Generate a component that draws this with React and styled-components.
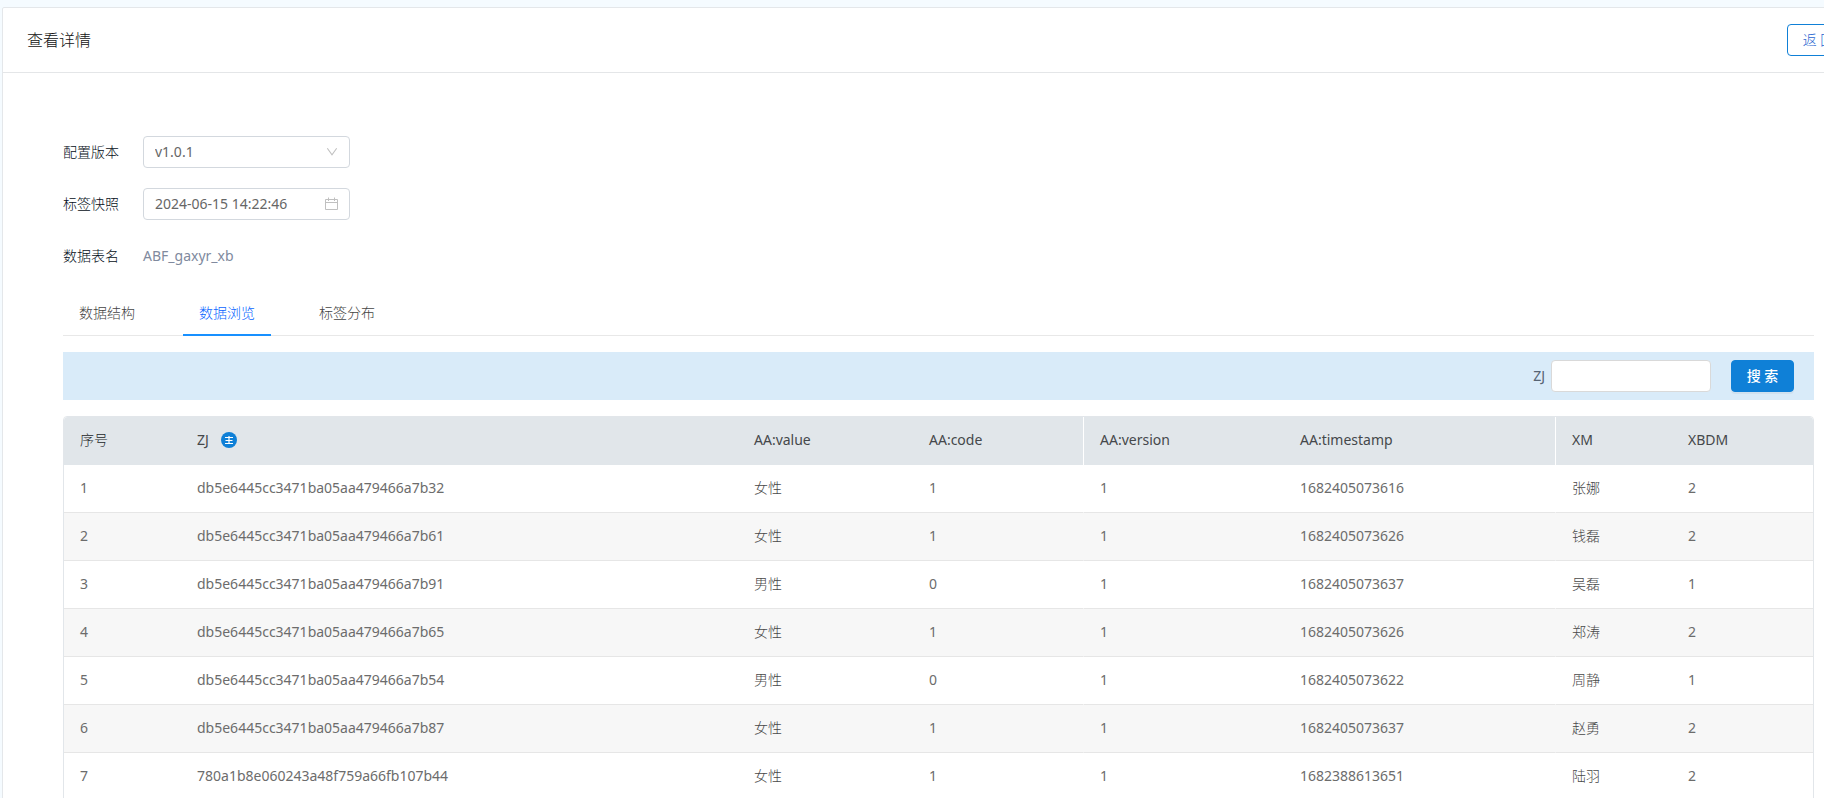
import React from 'react';
import styled, { createGlobalStyle } from 'styled-components';

const GlobalStyle = createGlobalStyle`
  *, *::before, *::after { box-sizing: border-box; }
  html, body { margin: 0; height: 100%; }
  body {
    overflow: hidden;
    background: #f5fbff;
    color: #595959;
    font-family: 'Noto Sans', 'Noto Sans CJK SC', sans-serif;
    font-size: 14px;
    font-weight: 300;
    line-height: 22px;
  }
  button, input, select { font: inherit; color: inherit; }
`;

/* The panel runs past the right edge of the window, which clips it. */
const Panel = styled.main`
  width: calc(100% + 49px);
  margin: 7px 0 0 2px;
  background: #fff;
  border: 1px solid #e4e7ea;
  border-radius: 2px;
`;

const Header = styled.header`
  display: flex;
  align-items: center;
  justify-content: space-between;
  height: 65px;
  padding: 0 24px;
  border-bottom: 1px solid #e4e6e8;
`;

const Title = styled.h1`
  margin: 0;
  font-size: 16px;
  line-height: 24px;
  font-weight: 300;
  color: #111;
`;

const Button = styled.button`
  width: 63px;
  height: 32px;
  padding: 0;
  border: 1px solid #0f80d7;
  border-radius: 4px;
  background: ${(p) => (p.$primary ? '#0f80d7' : '#fff')};
  color: ${(p) => (p.$primary ? '#fff' : '#1f66d0')};
  font-weight: ${(p) => (p.$primary ? 500 : 300)};
  line-height: 22px;
  white-space: pre;
  box-shadow: ${(p) => (p.$primary ? '0 2px 0 rgba(0, 0, 0, 0.04)' : 'none')};
`;

const Body = styled.div`
  padding: 63px 60px 24px;
`;

const Form = styled.div`
  display: grid;
  grid-template-columns: 80px 207px;
  grid-auto-rows: 32px;
  row-gap: 20px;
  align-items: center;
`;

const Label = styled.label`
  color: #050e20;
`;

const TableName = styled.output`
  color: #808a9e;
  font-weight: 400;
`;

const Field = styled.div`
  display: flex;
  align-items: center;
  height: 32px;
  padding-right: 11px;
  border: 1px solid #d3d8de;
  border-radius: 4px;
  background: #fff;
  color: #c0c0c0;
`;

const Select = styled.select`
  appearance: none;
  flex: 1;
  min-width: 0;
  height: 30px;
  padding: 0 0 0 11px;
  border: 0;
  outline: 0;
  background: transparent;
  color: #666;
  font-weight: 400;
`;

const DateInput = styled.input`
  flex: 1;
  min-width: 0;
  height: 30px;
  padding: 0 0 2px 11px;
  border: 0;
  outline: 0;
  background: transparent;
  color: #666;
  font-weight: 400;
`;

const Tabs = styled.div`
  display: flex;
  gap: 32px;
  height: 46px;
  margin-top: 18px;
  border-bottom: 1px solid #e8e8e8;
`;

const Tab = styled.button`
  height: 46px;
  padding: 2px 16px 0;
  border: 0;
  border-bottom: 2px solid ${(p) => (p.$active ? '#1890ff' : 'transparent')};
  background: none;
  color: ${(p) => (p.$active ? '#0a66ff' : '#444')};
`;

const SearchBar = styled.form`
  display: flex;
  align-items: center;
  justify-content: flex-end;
  height: 48px;
  margin: 16px 0;
  padding-right: 20px;
  background: #d9ebf9;
  color: #566373;
  font-weight: 400;
`;

const SearchInput = styled.input`
  width: 160px;
  height: 32px;
  margin: 0 20px 0 6px;
  padding: 0 12px;
  border: 1px solid #d9d9d9;
  border-radius: 4px;
  background: #fff;
`;

const Table = styled.table`
  width: 100%;
  table-layout: fixed;
  border-collapse: separate;
  border-spacing: 0;
  border: 1px solid #e2e6ea;
  border-radius: 4px;
`;

const Col = styled.col`
  width: ${(p) => p.$width};
`;

const HeadCell = styled.th`
  height: 48px;
  padding: 0 16px 2px;
  border-right: ${(p) => (p.$split ? '1px solid #fff' : '0')};
  background: #e1e6ea;
  color: ${(p) => (p.$light ? '#222528' : '#45484b')};
  font-weight: ${(p) => (p.$light ? 300 : 400)};
  text-align: left;

  &:first-child { border-top-left-radius: 4px; }
  &:last-child { border-top-right-radius: 4px; }
`;

const HeadLabel = styled.span`
  display: flex;
  align-items: center;
  gap: 12px;
`;

const Row = styled.tr`
  background: #fff;
  &:nth-child(even) { background: #f7f7f7; }
`;

const Cell = styled.td`
  height: 48px;
  padding: 0 16px 2px;
  border-right: ${(p) => (p.$split ? '1px solid transparent' : '0')};
  border-bottom: 1px solid #e6e6e6;
  color: ${(p) => (p.$light ? '#484848' : '#6c6c6c')};
  font-weight: ${(p) => (p.$light ? 300 : 400)};
`;

const ChevronIcon = () => (
  <svg width="12" height="12" viewBox="0 0 12 12" fill="none" stroke="currentColor" aria-hidden="true">
    <path d="M1.3 2.2 6 8.8l4.7-6.6" strokeWidth="1.1" />
  </svg>
);

const CalendarIcon = () => (
  <svg width="13" height="14" viewBox="0 0 13 14" fill="none" stroke="currentColor" aria-hidden="true">
    <path d="M.5 2.5h12v10H.5zM.5 5.5h12M3.5.5v3.5M9.5.5v3.5" />
  </svg>
);

const KeyBadge = () => (
  <svg width="16" height="16" viewBox="0 0 16 16" role="img" aria-label="主键">
    <circle cx="8" cy="8" r="8" fill="#0f80d7" />
    <path d="M4 5.5h8M4.5 8.5h7M4 11.5h8M8 4v7.5" fill="none" stroke="#fff" strokeWidth="1.2" />
  </svg>
);

const columns = [
  { title: '序号', width: '117px', lightHead: true },
  { title: 'ZJ', width: 'auto', primary: true },
  { title: 'AA:value', width: '175px', light: true },
  { title: 'AA:code', width: '171px', split: true },
  { title: 'AA:version', width: '200px' },
  { title: 'AA:timestamp', width: '272px', split: true },
  { title: 'XM', width: '116px', light: true },
  { title: 'XBDM', width: '141px' },
];

const rows = [
  ['1', 'db5e6445cc3471ba05aa479466a7b32', '女性', '1', '1', '1682405073616', '张娜', '2'],
  ['2', 'db5e6445cc3471ba05aa479466a7b61', '女性', '1', '1', '1682405073626', '钱磊', '2'],
  ['3', 'db5e6445cc3471ba05aa479466a7b91', '男性', '0', '1', '1682405073637', '吴磊', '1'],
  ['4', 'db5e6445cc3471ba05aa479466a7b65', '女性', '1', '1', '1682405073626', '郑涛', '2'],
  ['5', 'db5e6445cc3471ba05aa479466a7b54', '男性', '0', '1', '1682405073622', '周静', '1'],
  ['6', 'db5e6445cc3471ba05aa479466a7b87', '女性', '1', '1', '1682405073637', '赵勇', '2'],
  ['7', '780a1b8e060243a48f759a66fb107b44', '女性', '1', '1', '1682388613651', '陆羽', '2'],
];

const tabs = ['数据结构', '数据浏览', '标签分布'];

export default function App() {
  const [active, setActive] = React.useState(1);
  return (
    <>
      <GlobalStyle />
      <Panel>
        <Header>
          <Title>查看详情</Title>
          <Button type="button">返 回</Button>
        </Header>
        <Body>
          <Form>
            <Label htmlFor="version">配置版本</Label>
            <Field>
              <Select id="version" defaultValue="v1.0.1">
                <option>v1.0.1</option>
              </Select>
              <ChevronIcon />
            </Field>
            <Label htmlFor="snapshot">标签快照</Label>
            <Field>
              <DateInput id="snapshot" type="text" defaultValue="2024-06-15 14:22:46" />
              <CalendarIcon />
            </Field>
            <Label htmlFor="table-name">数据表名</Label>
            <TableName id="table-name">ABF_gaxyr_xb</TableName>
          </Form>
          <Tabs role="tablist">
            {tabs.map((name, i) => (
              <Tab
                key={name}
                type="button"
                role="tab"
                aria-selected={i === active}
                $active={i === active}
                onClick={() => setActive(i)}
              >
                {name}
              </Tab>
            ))}
          </Tabs>
          <SearchBar onSubmit={(e) => e.preventDefault()}>
            <label htmlFor="zj">ZJ</label>
            <SearchInput id="zj" type="text" />
            <Button type="submit" $primary>搜 索</Button>
          </SearchBar>
          <Table>
            <colgroup>
              {columns.map((c) => (
                <Col key={c.title} $width={c.width} />
              ))}
            </colgroup>
            <thead>
              <tr>
                {columns.map((c) => (
                  <HeadCell key={c.title} $split={c.split} $light={c.lightHead} scope="col">
                    <HeadLabel>
                      {c.title}
                      {c.primary && <KeyBadge />}
                    </HeadLabel>
                  </HeadCell>
                ))}
              </tr>
            </thead>
            <tbody>
              {rows.map((r) => (
                <Row key={r[0]}>
                  {r.map((v, i) => (
                    <Cell key={columns[i].title} $split={columns[i].split} $light={columns[i].light}>
                      {v}
                    </Cell>
                  ))}
                </Row>
              ))}
            </tbody>
          </Table>
        </Body>
      </Panel>
    </>
  );
}
